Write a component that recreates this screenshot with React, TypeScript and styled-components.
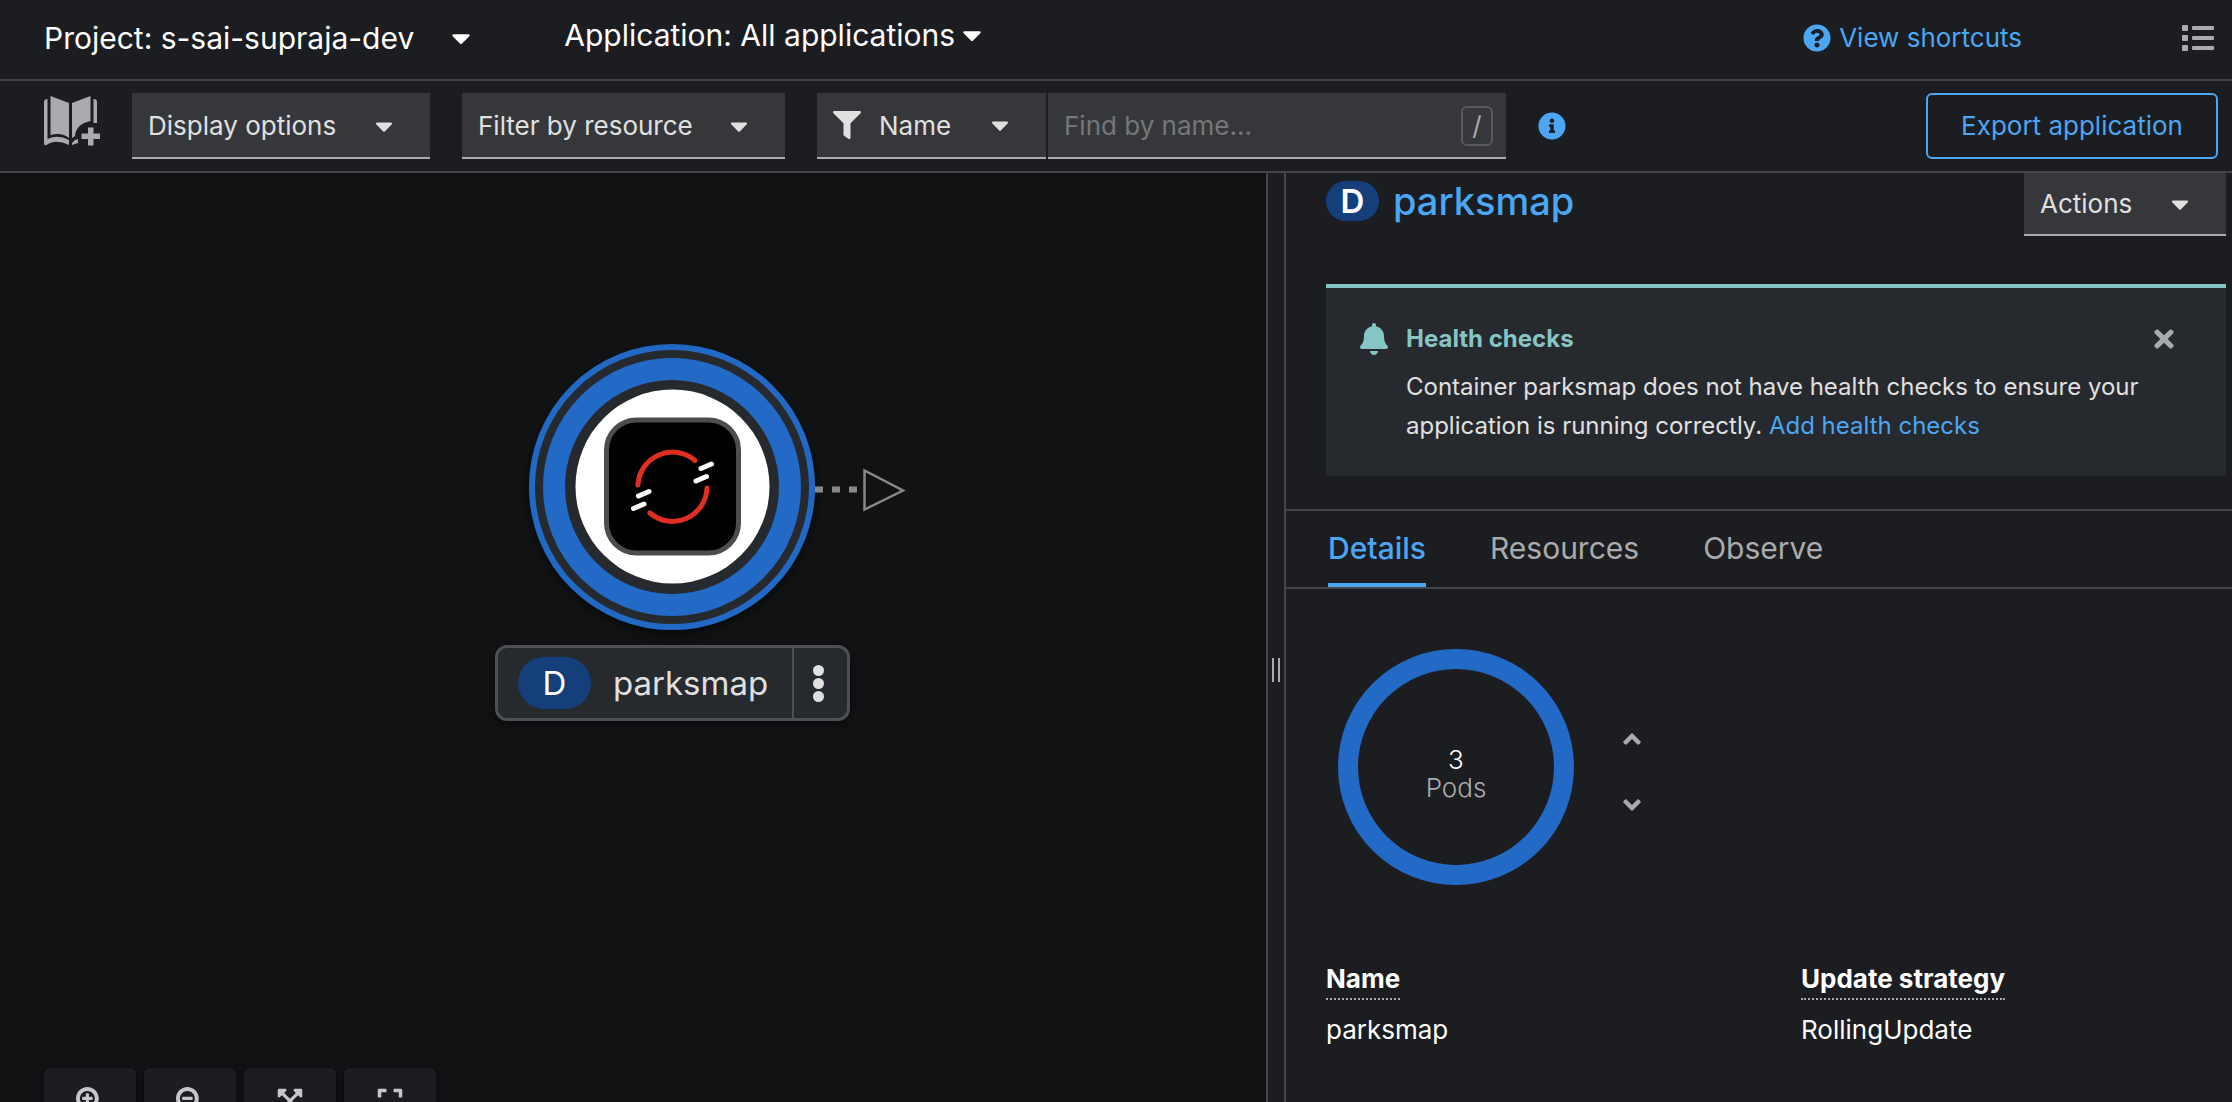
import React, { useState } from 'react';
import styled, { createGlobalStyle } from 'styled-components';
import {
  FaAngleDown, FaAngleUp, FaBell, FaCaretDown, FaExpand, FaExpandArrowsAlt, FaFilter,
  FaInfoCircle, FaList, FaQuestionCircle, FaSearchMinus, FaSearchPlus, FaTimes,
} from 'react-icons/fa';

const c = {
  panel: '#1c1d21',
  canvas: '#101214',
  raised: '#26292d',
  control: '#36373a',
  line: '#444548',
  text: '#e0e0e0',
  white: '#ffffff',
  muted: '#aaabac',
  placeholder: '#76777a',
  link: '#4ba6f3',
  blue: '#2369c6',
  badge: '#143f7a',
  teal: '#86c5c5',
};

const GlobalStyle = createGlobalStyle`
  *, *::before, *::after { box-sizing: border-box; }
  body { margin: 0; background: ${c.panel}; }
  body, button, input, select { font-family: Inter, 'Open Sans', sans-serif; }
  button, select, input { margin: 0; border: 0; border-radius: 0; cursor: pointer; }
  h1, h2, p, dl, dd { margin: 0; }
  svg { flex: none; display: block; }
`;

const Page = styled.div`
  display: flex;
  flex-direction: column;
  height: 100vh;
  overflow: hidden;
  color: ${c.text};
  font-size: 26px;
  line-height: 40px;
`;

const ContextBar = styled.header`
  display: flex;
  align-items: center;
  gap: 88px;
  height: 81px;
  padding: 0 18px 4px 44px;
  border-bottom: 2px solid ${c.line};
`;

const ContextToggle = styled.button<{ $gap: number; $lift?: number }>`
  display: flex;
  align-items: center;
  gap: ${(p) => p.$gap}px;
  padding: 0 0 ${(p) => p.$lift ?? 0}px;
  background: none;
  color: ${c.white};
  font-size: 30px;
  line-height: 40px;
  white-space: nowrap;
`;

const ContextActions = styled.div`
  display: flex;
  align-items: center;
  gap: 160px;
  margin-left: auto;
`;

const Shortcuts = styled.a`
  display: flex;
  align-items: center;
  gap: 8px;
  color: ${c.link};
  text-decoration: none;
`;

const IconButton = styled.button<{ $color?: string }>`
  display: flex;
  align-items: center;
  justify-content: center;
  padding: 0;
  background: none;
  color: ${(p) => p.$color ?? c.muted};
`;

const Toolbar = styled.div`
  display: flex;
  align-items: center;
  height: 92px;
  padding: 0 14px 0 44px;
  border-bottom: 2px solid ${c.line};
`;

const Filters = styled.div`
  display: flex;
  align-items: center;
  gap: 32px;
`;

const MenuToggle = styled.button<{ $width: number }>`
  display: flex;
  align-items: center;
  justify-content: space-between;
  width: ${(p) => p.$width}px;
  height: 66px;
  padding: 2px 32px 0 16px;
  border-bottom: 2px solid ${c.muted};
  background: ${c.control};
  color: ${c.text};
  font-size: 26px;
  line-height: 40px;
  white-space: nowrap;
`;

const SearchGroup = styled.div`
  display: flex;
  gap: 2px;
`;

const TypeField = styled.label`
  display: grid;
  grid-template-columns: 62px 1fr 60px;
  align-items: center;
  width: 229px;
  height: 66px;
  border-bottom: 2px solid ${c.muted};
  background: ${c.control};

  svg { pointer-events: none; grid-row: 1; }
  svg:first-of-type { grid-column: 1; margin-left: 16px; }
  svg:last-of-type { grid-column: 3; }
`;

const TypeSelect = styled.select`
  grid-column: 1 / -1;
  grid-row: 1;
  height: 64px;
  padding: 2px 0 0 62px;
  appearance: none;
  background: none;
  color: ${c.text};
  font-size: 26px;
  line-height: 40px;
`;

const NameField = styled.div`
  display: flex;
  align-items: center;
  width: 458px;
  height: 66px;
  padding: 2px 13px 0 16px;
  border-bottom: 2px solid ${c.muted};
  background: ${c.control};
`;

const NameInput = styled.input`
  flex: 1;
  min-width: 0;
  padding: 0;
  background: none;
  color: ${c.text};
  font-size: 26px;
  line-height: 40px;
  outline: none;

  &::placeholder { color: ${c.placeholder}; opacity: 1; }
`;

const Key = styled.kbd`
  display: flex;
  align-items: center;
  justify-content: center;
  width: 32px;
  height: 40px;
  border: 2px solid #58595c;
  border-radius: 6px;
  color: ${c.muted};
  font: 26px/36px Inter, sans-serif;
`;

const ExportButton = styled.button`
  width: 292px;
  height: 66px;
  margin-left: auto;
  border: 2px solid ${c.link};
  border-radius: 6px;
  background: none;
  color: ${c.link};
  font-size: 26px;
  line-height: 40px;
`;

const Workspace = styled.main`
  display: flex;
  flex: 1;
  min-height: 0;
`;

const Canvas = styled.section`
  position: relative;
  flex: 1;
  overflow: hidden;
  background: ${c.canvas};
`;

const NodeArt = styled.svg`
  position: absolute;
  left: 509px;
  top: 154px;
`;

const NodeLabel = styled.div`
  position: absolute;
  left: 495px;
  top: 472px;
  display: flex;
  align-items: stretch;
  width: 355px;
  height: 76px;
  border: 3px solid #4d4f52;
  border-radius: 12px;
  background: ${c.raised};
  box-shadow: 0 4px 12px rgba(0, 0, 0, 0.4);
`;

const NodeName = styled.div`
  display: flex;
  flex: 1;
  align-items: center;
  gap: 22px;
  padding-left: 20px;
  font-size: 33px;
`;

const KindBadge = styled.span<{ $large?: boolean }>`
  display: flex;
  align-items: center;
  justify-content: center;
  width: ${(p) => (p.$large ? 73 : 53)}px;
  height: ${(p) => (p.$large ? 52 : 40)}px;
  border-radius: 26px;
  background: ${c.badge};
  color: ${c.white};
  font-size: 33px;
  font-weight: ${(p) => (p.$large ? 400 : 600)};
`;

const NodeMenu = styled.button`
  display: flex;
  flex-direction: column;
  align-items: center;
  justify-content: center;
  gap: 2px;
  width: 55px;
  padding: 0 4px 0 0;
  border-left: 2px solid #4d4f52;
  background: none;
`;

const Dot = styled.span`
  width: 11px;
  height: 11px;
  border-radius: 50%;
  background: ${c.text};
`;

const Controls = styled.div`
  position: absolute;
  left: 44px;
  bottom: -32px;
  display: flex;
  gap: 8px;
`;

const ControlButton = styled.button`
  display: flex;
  align-items: center;
  justify-content: center;
  width: 92px;
  height: 66px;
  padding: 0;
  border-radius: 6px;
  background: ${c.panel};
  color: #c6c7c8;
  box-shadow: 0 2px 6px rgba(0, 0, 0, 0.5);
`;

const Splitter = styled.div`
  display: flex;
  align-items: center;
  justify-content: center;
  gap: 4px;
  width: 20px;
  padding-top: 64px;
  border: solid ${c.line};
  border-width: 0 2px;
  cursor: col-resize;
`;

const Grip = styled.span`
  width: 2px;
  height: 24px;
  background: ${c.muted};
`;

const SidePanel = styled.aside`
  flex: 0 0 946px;
  overflow: hidden;
`;

const PanelHead = styled.div`
  display: flex;
  justify-content: space-between;
  align-items: flex-start;
  height: 111px;
  padding: 0 6px 0 40px;

  ${MenuToggle} { height: 63px; padding-top: 0; }
`;

const PanelTitle = styled.h1`
  display: flex;
  align-items: center;
  gap: 14px;
  padding-top: 6px;
  font-size: 38px;
  font-weight: 500;
  line-height: 44px;
`;

const Link = styled.a`
  color: ${c.link};
  text-decoration: none;
`;

const Alert = styled.section`
  display: grid;
  grid-template-columns: 48px 1fr 28px;
  align-content: start;
  align-items: center;
  row-gap: 8px;
  height: 192px;
  margin: 0 6px 33px 40px;
  padding: 31px 48px 0 32px;
  border-top: 4px solid ${c.teal};
  background: ${c.raised};
  color: ${c.teal};
`;

const AlertTitle = styled.h2`
  font-size: 24px;
  font-weight: 700;
  line-height: 40px;
`;

const AlertText = styled.p`
  grid-column: 2 / -1;
  color: ${c.text};
  font-size: 24px;
  line-height: 39px;
`;

const Tabs = styled.div`
  display: flex;
  gap: 64px;
  height: 80px;
  padding: 0 42px;
  border: solid ${c.line};
  border-width: 2px 0;
`;

const Tab = styled.button<{ $active: boolean }>`
  padding: 2px 0 0;
  border-bottom: 4px solid ${(p) => (p.$active ? c.link : 'transparent')};
  background: none;
  color: ${(p) => (p.$active ? c.link : c.muted)};
  font-size: 30px;
  font-weight: ${(p) => (p.$active ? 500 : 400)};
  line-height: 40px;
`;

const Scale = styled.div`
  display: flex;
  align-items: center;
  gap: 44px;
  padding: 60px 52px 0;
`;

const Donut = styled.div`
  display: flex;
  flex-direction: column;
  align-items: center;
  justify-content: center;
  width: 236px;
  height: 236px;
  padding-top: 14px;
  border: 20px solid ${c.blue};
  border-radius: 50%;
  color: ${c.muted};
  font-weight: 300;
  line-height: 28px;
`;

const PodCount = styled.span`
  color: ${c.white};
`;

const Steppers = styled.div`
  display: flex;
  flex-direction: column;
  gap: 38px;
  padding-top: 10px;
`;

const Facts = styled.dl`
  display: grid;
  grid-template-columns: 1fr 1fr;
  column-gap: 44px;
  padding: 74px 0 0 40px;
  color: ${c.white};
`;

const Term = styled.dt`
  height: 42px;
  font-weight: 700;
`;

const Hint = styled.span`
  display: inline-block;
  height: 41px;
  border-bottom: 2px dotted ${c.muted};
`;

const Value = styled.dd`
  padding-top: 9px;
`;

const BookIcon = () => (
  <svg width="56" height="66" viewBox="0 0 56 66" fill={c.muted}>
    <path d="M6.500 3 25 10V45Q18 39 6.500 42Z" />
    <path d="M46.500 3 28 10V45L31 43Q32 31 46.500 28Z" />
    <path d="M0 9Q0 6 3.500 6V46Q14 41 25 47V52Q13 46 4 51Q0 54 0 50Z" />
    <path d="M49.500 6Q53 6 53 9V30H49.500Z" />
    <path d="M28 50 31 47 34 46V50L28 52Z" />
    <path d="M44 34.500h5.500v6h6.500v5.500h-6.500v6.500h-5.500v-6.500h-6.500v-5.500h6.500z" />
  </svg>
);

const DeploymentNode = () => (
  <NodeArt width="420" height="330" viewBox="509 327 420 330" fill="none" aria-label="parksmap deployment">
    <defs>
      <filter id="node-shadow" x="-20%" y="-20%" width="140%" height="140%">
        <feDropShadow dx="0" dy="5" stdDeviation="6" floodColor="#000" floodOpacity="0.5" />
      </filter>
    </defs>
    <circle cx="672" cy="487" r="140" fill={c.raised} stroke={c.blue} strokeWidth="6" filter="url(#node-shadow)" />
    <circle cx="672" cy="487" r="118" stroke={c.blue} strokeWidth="22" />
    <circle cx="672.500" cy="486.500" r="97" fill="#fff" />
    <rect x="606.500" y="420" width="132" height="133" rx="30" fill="#000" stroke="#4d4d4d" strokeWidth="5" />
    <g stroke="#e02e22" strokeWidth="5" strokeLinecap="round">
      <path d="M638 485A34.500 34.500 0 0 1 695 460.500" />
      <path d="M707 488A34.500 34.500 0 0 1 650 513" />
    </g>
    <g stroke="#fff" strokeWidth="5" strokeLinecap="round">
      <path d="M701 468.500 711.500 464M696 481 706.500 476.500M638.500 496 649 491.500M633.500 508.500 644 504" />
    </g>
    <path d="M815 489.500h44" stroke="#87888a" strokeWidth="6" strokeDasharray="8 9" />
    <path d="M864.500 470.500V509.500L903 490.500Z" stroke="#87888a" strokeWidth="2.500" />
  </NodeArt>
);

const tabs = ['Details', 'Resources', 'Observe'];

export default function App() {
  const [tab, setTab] = useState('Details');
  const [pods, setPods] = useState(3);

  return (
    <Page>
      <GlobalStyle />
      <ContextBar>
        <ContextToggle $gap={32} aria-haspopup="menu">
          Project: s-sai-supraja-dev
          <FaCaretDown size={30} />
        </ContextToggle>
        <ContextToggle $gap={2} $lift={6} aria-haspopup="menu">
          Application: All applications
          <FaCaretDown size={30} />
        </ContextToggle>
        <ContextActions>
          <Shortcuts href="#shortcuts">
            <FaQuestionCircle size={28} />
            View shortcuts
          </Shortcuts>
          <IconButton aria-label="List view">
            <FaList size={32} />
          </IconButton>
        </ContextActions>
      </ContextBar>

      <Toolbar>
        <Filters>
          <IconButton aria-label="Add to project">
            <BookIcon />
          </IconButton>
          <MenuToggle $width={298} aria-haspopup="menu">
            Display options
            <FaCaretDown size={28} />
          </MenuToggle>
          <MenuToggle $width={323} aria-haspopup="menu">
            Filter by resource
            <FaCaretDown size={28} />
          </MenuToggle>
          <SearchGroup>
            <TypeField>
              <FaFilter size={28} color={c.text} />
              <TypeSelect aria-label="Filter type" defaultValue="Name">
                <option>Name</option>
                <option>Label</option>
              </TypeSelect>
              <FaCaretDown size={28} color={c.text} />
            </TypeField>
            <NameField>
              <NameInput type="text" aria-label="Find by name" placeholder="Find by name..." />
              <Key>/</Key>
            </NameField>
          </SearchGroup>
          <IconButton $color={c.link} aria-label="Search help">
            <FaInfoCircle size={28} />
          </IconButton>
        </Filters>
        <ExportButton>Export application</ExportButton>
      </Toolbar>

      <Workspace>
        <Canvas>
          <DeploymentNode />
          <NodeLabel>
            <NodeName>
              <KindBadge $large>D</KindBadge>
              parksmap
            </NodeName>
            <NodeMenu aria-label="parksmap actions">
              <Dot />
              <Dot />
              <Dot />
            </NodeMenu>
          </NodeLabel>
          <Controls>
            <ControlButton aria-label="Zoom in"><FaSearchPlus size={28} /></ControlButton>
            <ControlButton aria-label="Zoom out"><FaSearchMinus size={28} /></ControlButton>
            <ControlButton aria-label="Fit to screen"><FaExpandArrowsAlt size={28} /></ControlButton>
            <ControlButton aria-label="Reset view"><FaExpand size={28} /></ControlButton>
          </Controls>
        </Canvas>
        <Splitter role="separator" aria-orientation="vertical">
          <Grip />
          <Grip />
        </Splitter>
        <SidePanel>
          <PanelHead>
            <PanelTitle>
              <KindBadge>D</KindBadge>
              <Link href="#parksmap">parksmap</Link>
            </PanelTitle>
            <MenuToggle $width={202} aria-haspopup="menu">
              Actions
              <FaCaretDown size={28} />
            </MenuToggle>
          </PanelHead>
          <Alert>
            <FaBell size={32} />
            <AlertTitle>Health checks</AlertTitle>
            <IconButton aria-label="Close alert"><FaTimes size={28} /></IconButton>
            <AlertText>
              Container parksmap does not have health checks to ensure your application is running
              correctly. <Link href="#health">Add health checks</Link>
            </AlertText>
          </Alert>
          <Tabs role="tablist">
            {tabs.map((name) => (
              <Tab key={name} role="tab" aria-selected={tab === name} $active={tab === name} onClick={() => setTab(name)}>
                {name}
              </Tab>
            ))}
          </Tabs>
          <Scale>
            <Donut>
              <PodCount>{pods}</PodCount>
              <span>Pods</span>
            </Donut>
            <Steppers>
              <IconButton aria-label="Increase the Pod count" onClick={() => setPods(pods + 1)}>
                <FaAngleUp size={28} />
              </IconButton>
              <IconButton aria-label="Decrease the Pod count" onClick={() => setPods(Math.max(0, pods - 1))}>
                <FaAngleDown size={28} />
              </IconButton>
            </Steppers>
          </Scale>
          <Facts>
            <div>
              <Term><Hint>Name</Hint></Term>
              <Value>parksmap</Value>
            </div>
            <div>
              <Term><Hint>Update strategy</Hint></Term>
              <Value>RollingUpdate</Value>
            </div>
          </Facts>
        </SidePanel>
      </Workspace>
    </Page>
  );
}
